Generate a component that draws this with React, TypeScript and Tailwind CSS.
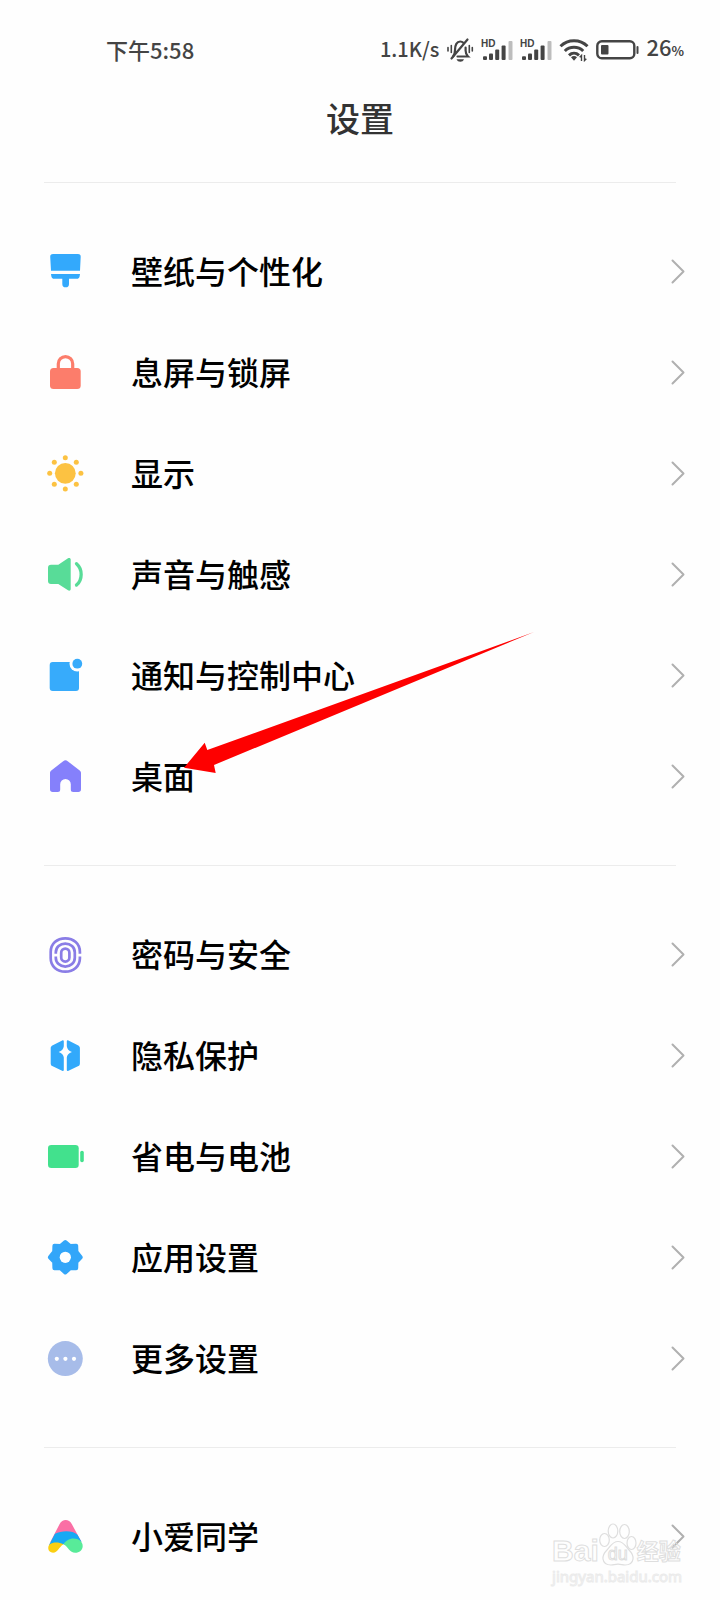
import type { ReactNode } from "react";

function BrushIcon() {
  return (
    <g fill="#33a9fc">
      <path d="M8 3h25c1.800 0 2.800 1 2.700 2.700L35 19.700H6L5.200 5.700C5.100 4 6.200 3 8 3z" />
      <path d="M6 23h29l-.3 2c-.2 1.900-1.200 2.800-3 2.800H24v5.200a3.300 3.300 0 0 1-6.700 0v-5.200H9.300c-1.800 0-2.800-.9-3-2.800z" />
    </g>
  );
}

function LockIcon() {
  return (
    <g>
      <path d="M13.300 18v-6.200a7.200 7.200 0 0 1 14.400 0V18" fill="none" stroke="#fc7d6b" strokeWidth="3.200" />
      <rect x="5" y="16" width="30.700" height="21" rx="3.500" fill="#fc7d6b" />
    </g>
  );
}

function SunIcon() {
  return (
    <g fill="#fcc242">
      <circle cx="20.300" cy="20.300" r="10.400" />
      <circle cx="20.300" cy="4.700" r="2.500" />
      <circle cx="20.300" cy="35.900" r="2.500" />
      <circle cx="4.700" cy="20.300" r="2.500" />
      <circle cx="35.900" cy="20.300" r="2.500" />
      <circle cx="9.300" cy="9.300" r="2.500" />
      <circle cx="31.300" cy="9.300" r="2.500" />
      <circle cx="9.300" cy="31.300" r="2.500" />
      <circle cx="31.300" cy="31.300" r="2.500" />
    </g>
  );
}

function SpeakerIcon() {
  return (
    <g>
      <path
        d="M6 10.700h7.300L23 4.300c1.300-.9 2.700-.3 2.700 1.200v29.600c0 1.500-1.400 2.100-2.700 1.200L13.300 30H6a3 3 0 0 1-3-3V13.700a3 3 0 0 1 3-3z"
        fill="#58dc98"
      />
      <path d="M31.500 9.700c6.200 5.400 6.200 16 0 21.400" fill="none" stroke="#58dc98" strokeWidth="3.300" strokeLinecap="round" />
    </g>
  );
}

function NoticeIcon() {
  return (
    <g>
      <rect x="4.700" y="7" width="29.300" height="29" rx="3" fill="#37abfb" />
      <circle cx="32.300" cy="8.700" r="7.800" fill="#fefefe" />
      <circle cx="32.300" cy="8.700" r="4.900" fill="#37abfb" />
    </g>
  );
}

function HomeIcon() {
  return (
    <path
      d="M18.200 5.200c1.500-1.200 3-1.200 4.500 0l12 9.300c.9.700 1.300 1.500 1.300 2.600v16.200c0 1.800-.9 2.700-2.700 2.700h-5c-1.700 0-2.500-.8-2.500-2.500v-5.300a5.300 5.300 0 0 0-10.600 0v5.300c0 1.700-.8 2.500-2.500 2.500h-5C5.900 36 5 35.100 5 33.300V17.100c0-1.100.4-1.900 1.300-2.600z"
      fill="#8580fb"
    />
  );
}

function FingerprintIcon() {
  return (
    <g fill="none" stroke="#8a7de6" strokeWidth="2.700">
      <path d="M34.900 19.800V18C34.900 9.700 28.600 4.400 20.300 4.400S5.700 9.700 5.700 18v6.200c0 8 6.300 13.400 14.600 13.400S34.900 32.200 34.900 24.200V22.500" />
      <path d="M10.800 19.800V18.500c0-5.200 4.200-8.900 9.500-8.900s9.500 3.700 9.500 8.900v5.200c0 5.200-4.200 8.900-9.500 8.900s-9.500-3.700-9.500-8.900V22.500" />
      <rect x="16.200" y="14.600" width="8.200" height="13" rx="4.100" />
    </g>
  );
}

function ShieldIcon() {
  return (
    <g fill="#32a9fb">
      <path d="M18.800 6.200v5.100c-.3 2.700-1.900 4.500-5.100 5.600 3.200 1.100 4.800 2.900 5.100 5.600v12.600c0 1-.8 1.200-1.700.7L7.200 31C6.200 30.500 5.700 29.500 5.700 28.400V13.300c0-1.200.6-2.100 1.600-2.700l9.900-5.200c.9-.5 1.600-.2 1.600.8z" />
      <path d="M21.800 6.200v5.100c.3 2.700 1.900 4.500 5.100 5.600-3.200 1.100-4.800 2.900-5.100 5.600v12.600c0 1 .8 1.200 1.700.7l9.900-4.800c1-.5 1.500-1.500 1.500-2.600V13.300c0-1.200-.6-2.100-1.600-2.700l-9.900-5.200c-.9-.5-1.600-.2-1.600.8z" />
    </g>
  );
}

function BatteryIcon() {
  return (
    <g fill="#42e18d">
      <rect x="3" y="9" width="30.700" height="23" rx="3.300" />
      <rect x="35.200" y="14.700" width="3.600" height="11.600" rx="1.800" />
    </g>
  );
}

function GearIcon() {
  return (
    <g>
      <path
        d="M20.300 5l4.700 4.100 6.200-.4.200 6 4.300 5.600-4.300 4.700-.2 6.200-6.200.1-4.700 4.200-4.700-4.200-6.200-.1-.2-6.200-4.300-4.700 4.300-5.600.2-6 6.200.4z"
        fill="#33a6f9"
        stroke="#33a6f9"
        strokeWidth="4"
        strokeLinejoin="round"
      />
      <circle cx="20.300" cy="20.300" r="5.600" fill="#ffffff" />
    </g>
  );
}

function MoreIcon() {
  return (
    <g>
      <circle cx="20.300" cy="20.600" r="17.500" fill="#a7bce9" />
      <circle cx="11.800" cy="20.800" r="2.100" fill="#ffffff" />
      <circle cx="20.400" cy="20.800" r="2.100" fill="#ffffff" />
      <circle cx="29" cy="20.800" r="2.100" fill="#ffffff" />
    </g>
  );
}

function AssistantIcon() {
  return (
    <g>
      <path d="M4.300 28L14.500 8.200c3-5.600 9.400-5.600 12.400 0L36.500 26c-5-4-9.500-7-16-7S8 22 4.300 28z" fill="#fa6fa5" />
      <path d="M3.800 29.500L10 17.800c6.500-3.500 17.500-3.800 22.500 1l4 7c-6-1.500-12 0-14.500 3.500l-3.500-1z" fill="#17a9f4" />
      <path d="M18.500 28.200c-5-2.300-10.500-2.200-13.700.1C2.300 30.200 2.500 36.700 8 36.700c4.700 0 6-6 10.500-8.500z" fill="#fbcf12" />
      <path d="M18.500 28c2-2.800 5.500-5.500 10-5.500 5.200 0 9.200 3.200 9.200 7.400s-3.400 6.800-7.500 6.800c-5.500 0-7.200-5.700-11.700-8.700z" fill="#58eb99" />
    </g>
  );
}

function Chevron() {
  return (
    <svg className="h-[25px] w-[14px] shrink-0" viewBox="0 0 14 25" aria-hidden="true">
      <path d="M1.500 1.500L12.500 12.500L1.500 23.500" fill="none" stroke="#b0b0b0" strokeWidth="2" strokeLinecap="round" strokeLinejoin="round" />
    </svg>
  );
}

function Pointer() {
  return (
    <svg
      className="pointer-events-none absolute left-[184px] top-[-94px] z-10 h-[142px] w-[350px]"
      viewBox="0 0 350 142"
      aria-hidden="true"
    >
      <path d="M0 135.700L20.700 110.700L23.300 118L350 0L30 133L31.700 141z" fill="#fe0000" />
    </svg>
  );
}

function MutedBell() {
  return (
    <svg className="h-[26px] w-[28px]" viewBox="0 0 28 26" aria-hidden="true">
      <g fill="none" stroke="#444444" strokeWidth="2.200" strokeLinecap="round">
        <path d="M7 19.500c1.500-1.500 2-3 2-6.500 0-5 1.800-8.500 5.200-8.500 1.200 0 2.300.4 3.100 1.200M19.600 10.500v3c0 3 .8 4.500 2.400 6h-10.500" />
        <path d="M21.500 2.500L5.500 21.500" />
        <path d="M5.300 8.500v7M2 10.500v3.500M23.300 8.500v7M26.300 10.500v3.500" strokeWidth="1.600" />
      </g>
      <path d="M10.500 22.300h7.500c-.6 1.700-2 2.500-3.700 2.500s-3.200-.8-3.800-2.500z" fill="#444444" />
    </svg>
  );
}

function Signal() {
  return (
    <svg className="h-[24px] w-[32px]" viewBox="0 0 32 24" role="img" aria-label="HD">
      <text x="0" y="9" className="font-['Liberation_Sans'] text-[10px] font-bold" fill="#444444">
        HD
      </text>
      <g fill="#444444">
        <rect x="2" y="18.300" width="4" height="3.700" rx="1" />
        <rect x="8" y="15.500" width="4" height="6.500" rx="1" />
        <rect x="14.200" y="11.500" width="4" height="10.500" rx="1" />
        <rect x="20.600" y="7.500" width="4" height="14.500" rx="1" />
      </g>
      <rect x="27.500" y="3" width="4" height="19" rx="1" fill="#bdbdbd" />
    </svg>
  );
}

function Wifi() {
  return (
    <svg className="h-[24px] w-[30px]" viewBox="0 0 30 24" aria-hidden="true">
      <g fill="none" stroke="#444444" strokeWidth="3">
        <path d="M1.500 8.300c7.500-7.400 19.500-7.400 27 0" />
        <path d="M5.800 13c5-5 13.400-5 18.400 0" />
        <path d="M10 17.300c2.900-2.700 7.100-2.700 10 0" />
      </g>
      <path d="M12 19.200c1.800-1.500 4.200-1.500 6 0L15 22.700z" fill="#444444" />
      <path d="M22.500 23v-5.500l-1.800 1.800M25.500 17v5.500l1.800-1.800" fill="none" stroke="#444444" strokeWidth="1.400" />
    </svg>
  );
}

function BatteryLevel() {
  return (
    <svg className="h-[22px] w-[43px]" viewBox="0 0 43 22" aria-hidden="true">
      <rect x="1.300" y="2.300" width="37" height="17" rx="4.500" fill="none" stroke="#444444" strokeWidth="2.400" />
      <rect x="5" y="6" width="7.500" height="9.600" rx="1" fill="#444444" />
      <path d="M41.500 8v6" stroke="#444444" strokeWidth="2" strokeLinecap="round" />
    </svg>
  );
}

function StatusBar() {
  return (
    <div className="flex h-[100px] items-center justify-between pl-[106px] pr-[36px] text-[22px] font-medium leading-8 text-[#444444]">
      <span className="pb-[3px]">下午5:58</span>
      <div className="flex items-center gap-[7px]">
        <span className="pb-[3px] text-[20px]">1.1K/s</span>
        <MutedBell />
        <Signal />
        <Signal />
        <Wifi />
        <BatteryLevel />
        <span className="pb-[3px]">
          26<span className="text-[13px] font-bold">%</span>
        </span>
      </div>
    </div>
  );
}

type Item = { label: string; icon: ReactNode; pointed?: boolean };

const groups: Item[][] = [
  [
    { label: "壁纸与个性化", icon: <BrushIcon /> },
    { label: "息屏与锁屏", icon: <LockIcon /> },
    { label: "显示", icon: <SunIcon /> },
    { label: "声音与触感", icon: <SpeakerIcon /> },
    { label: "通知与控制中心", icon: <NoticeIcon /> },
    { label: "桌面", icon: <HomeIcon />, pointed: true },
  ],
  [
    { label: "密码与安全", icon: <FingerprintIcon /> },
    { label: "隐私保护", icon: <ShieldIcon /> },
    { label: "省电与电池", icon: <BatteryIcon /> },
    { label: "应用设置", icon: <GearIcon /> },
    { label: "更多设置", icon: <MoreIcon /> },
  ],
  [{ label: "小爱同学", icon: <AssistantIcon /> }],
];

function Row({ item }: { item: Item }) {
  return (
    <li className="relative">
      <a href="#" className="flex h-[101px] items-center pl-[45px] pr-[35px]">
        <svg className="h-[41px] w-[41px] shrink-0" viewBox="0 0 41 41" aria-hidden="true">
          {item.icon}
        </svg>
        <span className="ml-[45px] flex-1 pb-[2px] text-[32px] font-medium leading-[47px] text-black">
          {item.label}
        </span>
        <Chevron />
      </a>
      {item.pointed && <Pointer />}
    </li>
  );
}

function Watermark() {
  return (
    <div className="pointer-events-none absolute bottom-[14px] right-[38px] flex flex-col font-['Liberation_Sans','Noto_Sans_CJK_SC',sans-serif] text-transparent">
      <div className="flex items-end">
        <span className="text-[30px] font-bold leading-[30px] [-webkit-text-stroke:1px_#dedede]">Bai</span>
        <span className="relative flex h-[43px] w-[38px] items-end justify-center">
          <svg className="absolute inset-0 h-full w-full" viewBox="0 0 38 43" aria-hidden="true">
            <g fill="none" stroke="#dedede" strokeWidth="1.200">
              <ellipse cx="5.500" cy="17" rx="4.800" ry="6.500" />
              <ellipse cx="14" cy="8" rx="4.800" ry="7" />
              <ellipse cx="25.500" cy="8.500" rx="4.800" ry="7" />
              <ellipse cx="32.500" cy="20" rx="4.500" ry="6.500" />
              <path d="M19 18.500c-6 0-7.500 5-11 8.500-3 3-4.500 5-4 9 .6 4.500 4 6 8 6 2.500 0 4-.8 7-.8s4.500.8 7 .8c4 0 7.400-1.500 8-6 .5-4-1-6-4-9-3.500-3.500-5-8.500-11-8.500z" />
            </g>
          </svg>
          <span className="text-[18px] leading-[24px] [-webkit-text-stroke:1px_#dedede]">du</span>
        </span>
        <span className="text-[22px] font-bold leading-[28px] [-webkit-text-stroke:1px_#dedede]">经验</span>
      </div>
      <span className="font-['Noto_Sans'] text-[15px] leading-[20px] [-webkit-text-stroke:1px_#ebebeb]">
        jingyan.baidu.com
      </span>
    </div>
  );
}

export default function App() {
  return (
    <main className="relative min-h-screen overflow-hidden bg-[#fefefe] font-['Noto_Sans_CJK_SC',sans-serif]">
      <StatusBar />
      <h1 className="pb-[46px] text-center text-[34px] font-medium leading-[36px] text-[#333333]">
        设置
      </h1>
      {groups.map((items, index) => (
        <section key={index} className="pb-[38px] last-of-type:pb-0">
          <hr className="ml-[44px] mr-[44px] border-t border-[#ececec]" />
          <ul className="pt-[38px]">
            {items.map((item) => (
              <Row key={item.label} item={item} />
            ))}
          </ul>
        </section>
      ))}
      <Watermark />
    </main>
  );
}
